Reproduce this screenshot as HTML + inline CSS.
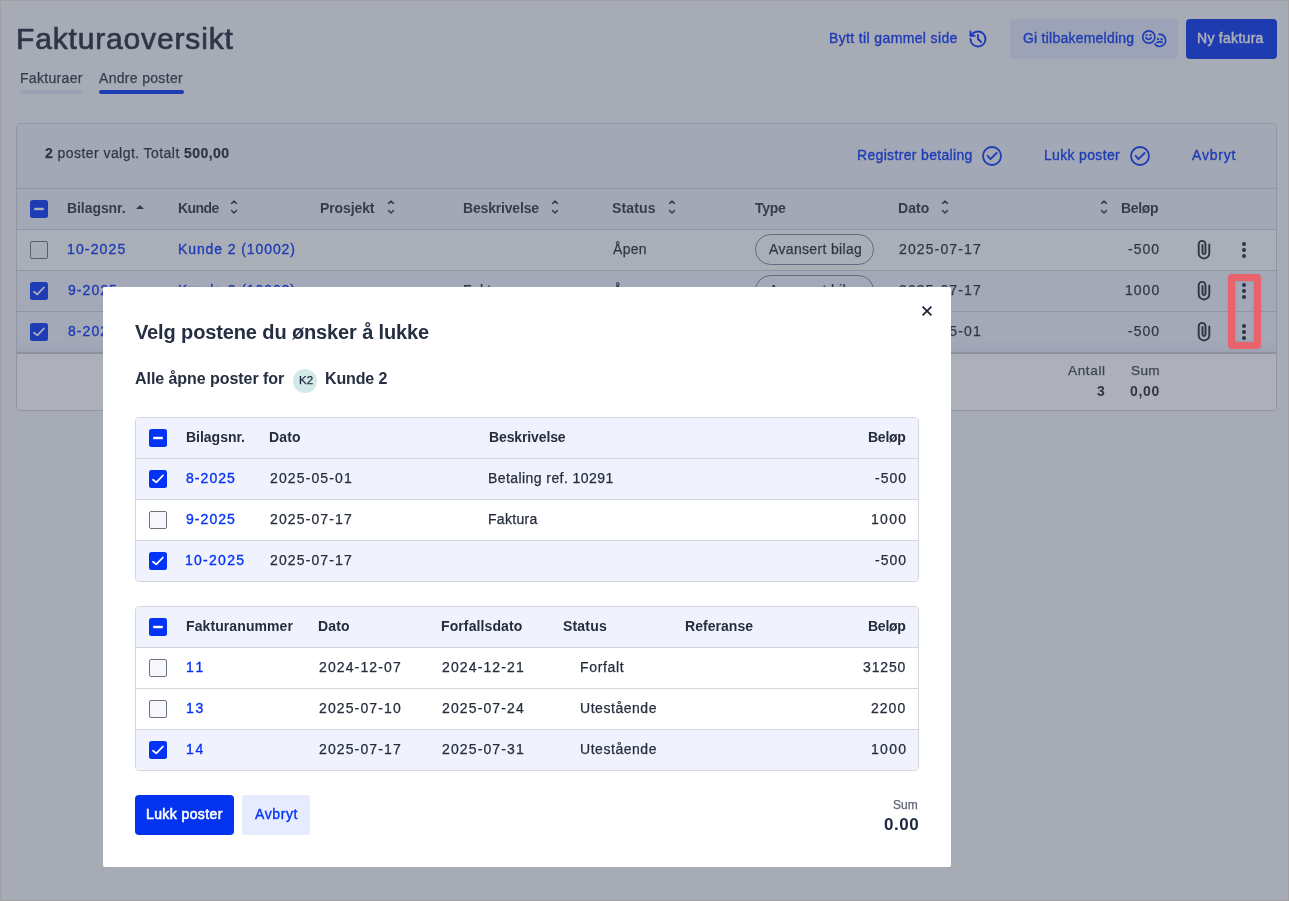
<!DOCTYPE html>
<html><head><meta charset="utf-8"><style>
html,body{margin:0;padding:0;}
body{width:1289px;height:901px;position:relative;overflow:hidden;background:#f4f6fa;font-family:"Liberation Sans", sans-serif;}
.abs{position:absolute;}
.t{position:absolute;white-space:nowrap;line-height:1;will-change:transform;}
.t b{font-weight:700;}
.panel{border:1px solid #cdd2dc;border-radius:4px;}
.pill{border:1px solid #80869a;border-radius:16px;}
.mt{border:1px solid #d4d7de;border-radius:4px;}
</style></head><body>
<span class="t" id="title" style="font-size:30px;font-weight:400;color:#1e293b;top:23.61px;letter-spacing:0.841px;-webkit-text-stroke:0.7px #1e293b;left:15.50px;">Fakturaoversikt</span>
<span class="t" id="tab1" style="font-size:14px;font-weight:400;color:#2b3445;top:71.15px;letter-spacing:0.319px;-webkit-text-stroke:0.25px #2b3445;left:19.70px;">Fakturaer</span>
<span class="t" id="tab2" style="font-size:14px;font-weight:400;color:#2b3445;top:71.15px;letter-spacing:0.319px;-webkit-text-stroke:0.25px #2b3445;left:99.00px;">Andre poster</span>
<div class="abs" style="left:20px;top:90px;width:63px;height:4px;border-radius:2px;background:#dfe5f6"></div>
<div class="abs" style="left:99px;top:90px;width:85px;height:4px;border-radius:2px;background:#0433f8"></div>
<span class="t" id="bytt" style="font-size:14px;font-weight:400;color:#0433f8;top:31.15px;letter-spacing:0.369px;-webkit-text-stroke:0.35px #0433f8;left:829.00px;">Bytt til gammel side</span>
<svg class="abs" style="left:968px;top:28.8px" width="20" height="20" viewBox="0 0 24 24" fill="none" stroke="#0433f8" stroke-width="2.3" stroke-linecap="round" stroke-linejoin="round">
      <path d="M3 12a9 9 0 1 0 9-9 9.75 9.75 0 0 0-6.74 2.74L3 8"/><path d="M3 3v5h5"/><path d="M12 7v5l3.6 3.6"/></svg>
<div class="abs" style="left:1010px;top:19px;width:168px;height:40px;border-radius:4px;background:#e3e9fd"></div>
<span class="t" id="gi" style="font-size:14px;font-weight:400;color:#0433f8;top:31.15px;letter-spacing:0.231px;-webkit-text-stroke:0.35px #0433f8;left:1022.70px;">Gi tilbakemelding</span>
<svg class="abs" style="left:1138px;top:26px" width="32" height="26" viewBox="0 0 32 26" fill="none" stroke="#0433f8" stroke-width="1.6" stroke-linecap="round" stroke-linejoin="round">
      <circle cx="10.8" cy="11" r="6.1"/><circle cx="8.5" cy="9.2" r="0.35" fill="#0433f8"/><circle cx="12.4" cy="9.2" r="0.35" fill="#0433f8"/>
      <path d="M7.8 11.8 Q10.3 15 13.4 11.8"/>
      <path d="M21.1 8.4 A6 6 0 1 1 16.7 17.8"/><circle cx="20" cy="13" r="0.4" fill="#0433f8"/><circle cx="23.6" cy="13.2" r="0.4" fill="#0433f8"/>
      <path d="M18.8 16.6 Q21.5 15.2 24.4 16.5"/></svg>
<div class="abs" style="left:1186px;top:19px;width:91px;height:40px;border-radius:4px;background:#0433f0"></div>
<span class="t" id="ny" style="font-size:14px;font-weight:400;color:#ffffff;top:31.15px;letter-spacing:0.287px;-webkit-text-stroke:0.4px #ffffff;left:1197.40px;">Ny faktura</span>
<div class="abs panel" style="left:16px;top:123px;width:1259px;height:286px;"></div>
<div class="abs" style="left:17px;top:124px;width:1259px;height:64px;background:#edf1fb;border-radius:3px 3px 0 0"></div>
<div class="abs" style="left:17px;top:188px;width:1259px;height:1px;background:#cdd2dc"></div>
<div class="abs" style="left:17px;top:189px;width:1259px;height:40px;background:#edf1fb"></div>
<div class="abs" style="left:17px;top:229px;width:1259px;height:1px;background:#cdd2dc"></div>
<div class="abs" style="left:17px;top:230px;width:1259px;height:40px;background:#fafbfc"></div>
<div class="abs" style="left:17px;top:270px;width:1259px;height:1px;background:#cdd2dc"></div>
<div class="abs" style="left:17px;top:271px;width:1259px;height:40px;background:#eef2fd"></div>
<div class="abs" style="left:17px;top:311px;width:1259px;height:1px;background:#cdd2dc"></div>
<div class="abs" style="left:17px;top:312px;width:1259px;height:40px;background:linear-gradient(#eef2fd 0,#eef2fd 70%,#e4e9f8 100%)"></div>
<div class="abs" style="left:17px;top:352px;width:1259px;height:2px;background:#c2c8d4"></div>
<div class="abs" style="left:17px;top:354px;width:1259px;height:56px;background:#ffffff;border-radius:0 0 3px 3px"></div>
<span class="t" id="valgt" style="font-size:14px;font-weight:400;color:#1e2738;top:146.15px;letter-spacing:0.44px;-webkit-text-stroke:0.25px #1e2738;left:45.30px;"><b>2</b> poster valgt. Totalt <b>500,00</b></span>
<span class="t" id="reg" style="font-size:14px;font-weight:400;color:#0433f8;top:148.15px;letter-spacing:0.333px;-webkit-text-stroke:0.35px #0433f8;left:856.80px;">Registrer betaling</span>
<span class="t" id="lukk" style="font-size:14px;font-weight:400;color:#0433f8;top:148.15px;letter-spacing:0.329px;-webkit-text-stroke:0.35px #0433f8;left:1044.00px;">Lukk poster</span>
<span class="t" id="avb" style="font-size:14px;font-weight:400;color:#0433f8;top:148.15px;letter-spacing:0.813px;-webkit-text-stroke:0.35px #0433f8;left:1192.40px;">Avbryt</span>
<svg class="abs" style="left:980px;top:144px" width="24" height="24" viewBox="0 0 24 24" fill="none" stroke="#0433f8" stroke-width="1.8" stroke-linecap="round" stroke-linejoin="round">
        <circle cx="12" cy="12" r="9"/><path d="M7.6 11.8 L10.4 15.2 L16.6 9"/></svg>
<svg class="abs" style="left:1128px;top:144px" width="24" height="24" viewBox="0 0 24 24" fill="none" stroke="#0433f8" stroke-width="1.8" stroke-linecap="round" stroke-linejoin="round">
        <circle cx="12" cy="12" r="9"/><path d="M7.6 11.8 L10.4 15.2 L16.6 9"/></svg>
<svg class="abs" style="left:30px;top:200px" width="18" height="18" viewBox="0 0 18 18"><rect x="0" y="0" width="18" height="18" rx="2.5" fill="#0433f8"/><path d="M4.2 9 H13.8" stroke="#fff" stroke-width="2.4"/></svg>
<span class="t" id="h1" style="font-size:14px;font-weight:700;color:#2b3445;top:201.15px;letter-spacing:-0.068px;left:66.70px;">Bilagsnr.</span>
<span class="t" id="h2" style="font-size:14px;font-weight:700;color:#2b3445;top:201.15px;letter-spacing:-0.591px;left:177.70px;">Kunde</span>
<span class="t" id="h3" style="font-size:14px;font-weight:700;color:#2b3445;top:201.15px;letter-spacing:-0.112px;left:320.20px;">Prosjekt</span>
<span class="t" id="h4" style="font-size:14px;font-weight:700;color:#2b3445;top:201.15px;letter-spacing:-0.175px;left:462.90px;">Beskrivelse</span>
<span class="t" id="h5" style="font-size:14px;font-weight:700;color:#2b3445;top:201.15px;letter-spacing:0.140px;left:612.00px;">Status</span>
<span class="t" id="h6" style="font-size:14px;font-weight:700;color:#2b3445;top:201.15px;letter-spacing:-0.284px;left:755.10px;">Type</span>
<span class="t" id="h7" style="font-size:14px;font-weight:700;color:#2b3445;top:201.15px;letter-spacing:0.080px;left:898.20px;">Dato</span>
<span class="t" id="h8" style="font-size:14px;font-weight:700;color:#2b3445;top:201.15px;letter-spacing:-0.334px;left:1121.20px;">Beløp</span>
<svg class="abs" style="left:134px;top:203px" width="12" height="8" viewBox="0 0 12 8"><path d="M2 6 L6 2 L10 6 Z" fill="#2b3445"/></svg>
<svg class="abs" style="left:227.9px;top:198px" width="12" height="18" viewBox="0 0 12 18" fill="none" stroke="#2b3445" stroke-width="1.4" stroke-linecap="round" stroke-linejoin="round"><path d="M3.5 5.5 L6 2.9 L8.5 5.5"/><path d="M3.5 12.5 L6 15.1 L8.5 12.5"/></svg>
<svg class="abs" style="left:385.0px;top:198px" width="12" height="18" viewBox="0 0 12 18" fill="none" stroke="#2b3445" stroke-width="1.4" stroke-linecap="round" stroke-linejoin="round"><path d="M3.5 5.5 L6 2.9 L8.5 5.5"/><path d="M3.5 12.5 L6 15.1 L8.5 12.5"/></svg>
<svg class="abs" style="left:549.0px;top:198px" width="12" height="18" viewBox="0 0 12 18" fill="none" stroke="#2b3445" stroke-width="1.4" stroke-linecap="round" stroke-linejoin="round"><path d="M3.5 5.5 L6 2.9 L8.5 5.5"/><path d="M3.5 12.5 L6 15.1 L8.5 12.5"/></svg>
<svg class="abs" style="left:665.5px;top:198px" width="12" height="18" viewBox="0 0 12 18" fill="none" stroke="#2b3445" stroke-width="1.4" stroke-linecap="round" stroke-linejoin="round"><path d="M3.5 5.5 L6 2.9 L8.5 5.5"/><path d="M3.5 12.5 L6 15.1 L8.5 12.5"/></svg>
<svg class="abs" style="left:938.5px;top:198px" width="12" height="18" viewBox="0 0 12 18" fill="none" stroke="#2b3445" stroke-width="1.4" stroke-linecap="round" stroke-linejoin="round"><path d="M3.5 5.5 L6 2.9 L8.5 5.5"/><path d="M3.5 12.5 L6 15.1 L8.5 12.5"/></svg>
<svg class="abs" style="left:1098.0px;top:198px" width="12" height="18" viewBox="0 0 12 18" fill="none" stroke="#2b3445" stroke-width="1.4" stroke-linecap="round" stroke-linejoin="round"><path d="M3.5 5.5 L6 2.9 L8.5 5.5"/><path d="M3.5 12.5 L6 15.1 L8.5 12.5"/></svg>
<div class="abs" style="left:30px;top:241px;width:16px;height:16px;border:1px solid #6b7282;border-radius:2px;background:#f7f8fb"></div>
<span class="t" id="rb0" style="font-size:14px;font-weight:400;color:#0433f8;top:242.15px;letter-spacing:1.135px;-webkit-text-stroke:0.35px #0433f8;left:66.50px;">10-2025</span>
<span class="t" id="rk0" style="font-size:14px;font-weight:400;color:#0433f8;top:242.15px;letter-spacing:0.904px;-webkit-text-stroke:0.35px #0433f8;left:177.50px;">Kunde 2 (10002)</span>
<span class="t" id="rs0" style="font-size:14px;font-weight:400;color:#1e2738;top:242.15px;letter-spacing:0.297px;-webkit-text-stroke:0.25px #1e2738;left:612.80px;">Åpen</span>
<div class="abs pill" style="left:755px;top:234px;width:117px;height:29px;"></div>
<span class="t" id="rp0" style="font-size:14px;font-weight:400;color:#1e2738;top:242.15px;letter-spacing:0.340px;-webkit-text-stroke:0.25px #1e2738;left:768.50px;">Avansert bilag</span>
<span class="t" id="rdt0" style="font-size:14px;font-weight:400;color:#1e2738;top:242.15px;letter-spacing:1.119px;-webkit-text-stroke:0.25px #1e2738;left:899.00px;">2025-07-17</span>
<span class="t" id="ra0" style="font-size:14px;font-weight:400;color:#1e2738;top:242.15px;letter-spacing:1.022px;-webkit-text-stroke:0.25px #1e2738;right:129.19px;">-500</span>
<svg class="abs" style="left:1194px;top:238px" width="20" height="24" viewBox="0 0 20 24" fill="none" stroke="#1e2738" stroke-width="1.9" stroke-linecap="round">
        <path d="M15.3 6.5 V15.2 A5.3 5.3 0 0 1 4.7 15.2 V6.3 A3.4 3.4 0 0 1 11.5 6.3 V14.6 A1.5 1.5 0 0 1 8.5 14.6 V7"/></svg>
<div class="abs" style="left:1242px;top:241.5px;width:4px;height:4px;border-radius:50%;background:#1e2738"></div>
<div class="abs" style="left:1242px;top:247.5px;width:4px;height:4px;border-radius:50%;background:#1e2738"></div>
<div class="abs" style="left:1242px;top:253.5px;width:4px;height:4px;border-radius:50%;background:#1e2738"></div>
<svg class="abs" style="left:30px;top:282px" width="18" height="18" viewBox="0 0 18 18"><rect x="0" y="0" width="18" height="18" rx="2.5" fill="#0433f8"/><path d="M4 9.7 L7.3 12.4 L13.9 5.5" stroke="#fff" stroke-width="1.8" fill="none" stroke-linecap="round" stroke-linejoin="round"/></svg>
<span class="t" id="rb1" style="font-size:14px;font-weight:400;color:#0433f8;top:283.15px;letter-spacing:1.059px;-webkit-text-stroke:0.35px #0433f8;left:67.50px;">9-2025</span>
<span class="t" id="rk1" style="font-size:14px;font-weight:400;color:#0433f8;top:283.15px;letter-spacing:0.904px;-webkit-text-stroke:0.35px #0433f8;left:177.50px;">Kunde 2 (10002)</span>
<span class="t" id="rd1" style="font-size:14px;font-weight:400;color:#1e2738;top:283.15px;letter-spacing:0.321px;-webkit-text-stroke:0.25px #1e2738;left:462.70px;">Faktura</span>
<span class="t" id="rs1" style="font-size:14px;font-weight:400;color:#1e2738;top:283.15px;letter-spacing:0.297px;-webkit-text-stroke:0.25px #1e2738;left:612.80px;">Åpen</span>
<div class="abs pill" style="left:755px;top:275px;width:117px;height:29px;"></div>
<span class="t" id="rp1" style="font-size:14px;font-weight:400;color:#1e2738;top:283.15px;letter-spacing:0.340px;-webkit-text-stroke:0.25px #1e2738;left:768.50px;">Avansert bilag</span>
<span class="t" id="rdt1" style="font-size:14px;font-weight:400;color:#1e2738;top:283.15px;letter-spacing:1.119px;-webkit-text-stroke:0.25px #1e2738;left:899.00px;">2025-07-17</span>
<span class="t" id="ra1" style="font-size:14px;font-weight:400;color:#1e2738;top:283.15px;letter-spacing:1.014px;-webkit-text-stroke:0.25px #1e2738;right:129.20px;">1000</span>
<svg class="abs" style="left:1194px;top:279px" width="20" height="24" viewBox="0 0 20 24" fill="none" stroke="#1e2738" stroke-width="1.9" stroke-linecap="round">
        <path d="M15.3 6.5 V15.2 A5.3 5.3 0 0 1 4.7 15.2 V6.3 A3.4 3.4 0 0 1 11.5 6.3 V14.6 A1.5 1.5 0 0 1 8.5 14.6 V7"/></svg>
<div class="abs" style="left:1242px;top:282.5px;width:4px;height:4px;border-radius:50%;background:#1e2738"></div>
<div class="abs" style="left:1242px;top:288.5px;width:4px;height:4px;border-radius:50%;background:#1e2738"></div>
<div class="abs" style="left:1242px;top:294.5px;width:4px;height:4px;border-radius:50%;background:#1e2738"></div>
<svg class="abs" style="left:30px;top:323px" width="18" height="18" viewBox="0 0 18 18"><rect x="0" y="0" width="18" height="18" rx="2.5" fill="#0433f8"/><path d="M4 9.7 L7.3 12.4 L13.9 5.5" stroke="#fff" stroke-width="1.8" fill="none" stroke-linecap="round" stroke-linejoin="round"/></svg>
<span class="t" id="rb2" style="font-size:14px;font-weight:400;color:#0433f8;top:324.15px;letter-spacing:1.059px;-webkit-text-stroke:0.35px #0433f8;left:67.50px;">8-2025</span>
<span class="t" id="rk2" style="font-size:14px;font-weight:400;color:#0433f8;top:324.15px;letter-spacing:0.904px;-webkit-text-stroke:0.35px #0433f8;left:177.50px;">Kunde 2 (10002)</span>
<span class="t" id="rd2" style="font-size:14px;font-weight:400;color:#1e2738;top:324.15px;letter-spacing:1.599px;-webkit-text-stroke:0.25px #1e2738;left:462.70px;">Betaling</span>
<span class="t" id="rs2" style="font-size:14px;font-weight:400;color:#1e2738;top:324.15px;letter-spacing:0.297px;-webkit-text-stroke:0.25px #1e2738;left:612.80px;">Åpen</span>
<div class="abs pill" style="left:755px;top:316px;width:117px;height:29px;"></div>
<span class="t" id="rp2" style="font-size:14px;font-weight:400;color:#1e2738;top:324.15px;letter-spacing:0.340px;-webkit-text-stroke:0.25px #1e2738;left:768.50px;">Avansert bilag</span>
<span class="t" id="rdt2" style="font-size:14px;font-weight:400;color:#1e2738;top:324.15px;letter-spacing:1.119px;-webkit-text-stroke:0.25px #1e2738;left:899.00px;">2025-05-01</span>
<span class="t" id="ra2" style="font-size:14px;font-weight:400;color:#1e2738;top:324.15px;letter-spacing:1.022px;-webkit-text-stroke:0.25px #1e2738;right:129.19px;">-500</span>
<svg class="abs" style="left:1194px;top:320px" width="20" height="24" viewBox="0 0 20 24" fill="none" stroke="#1e2738" stroke-width="1.9" stroke-linecap="round">
        <path d="M15.3 6.5 V15.2 A5.3 5.3 0 0 1 4.7 15.2 V6.3 A3.4 3.4 0 0 1 11.5 6.3 V14.6 A1.5 1.5 0 0 1 8.5 14.6 V7"/></svg>
<div class="abs" style="left:1242px;top:323.5px;width:4px;height:4px;border-radius:50%;background:#1e2738"></div>
<div class="abs" style="left:1242px;top:329.5px;width:4px;height:4px;border-radius:50%;background:#1e2738"></div>
<div class="abs" style="left:1242px;top:335.5px;width:4px;height:4px;border-radius:50%;background:#1e2738"></div>
<span class="t" id="antall" style="font-size:13.6px;font-weight:400;color:#3a4353;top:363.79px;letter-spacing:0.603px;-webkit-text-stroke:0.25px #3a4353;right:183.38px;">Antall</span>
<span class="t" id="sumf" style="font-size:13.6px;font-weight:400;color:#3a4353;top:363.79px;letter-spacing:0.336px;-webkit-text-stroke:0.25px #3a4353;right:129.04px;">Sum</span>
<span class="t" id="three" style="font-size:14px;font-weight:700;color:#1e2738;top:383.65px;letter-spacing:0.000px;right:184.21px;">3</span>
<span class="t" id="zero" style="font-size:14px;font-weight:700;color:#1e2738;top:383.65px;letter-spacing:0.646px;right:129.27px;">0,00</span>
<div class="abs" style="left:0;top:0;width:1289px;height:901px;background:rgba(65,71,90,0.43)"></div>
<div class="abs" style="left:1228px;top:274px;width:33px;height:75px;box-sizing:border-box;border:7px solid #e8636b;border-radius:4px;box-shadow:inset 0 0 3px rgba(30,40,70,0.18), 0 0 2px rgba(30,40,70,0.12)"></div>
<div class="abs" style="left:103px;top:287px;width:848px;height:580px;background:#fff;border-radius:2px"></div>
<svg class="abs" style="left:917px;top:301px" width="20" height="20" viewBox="0 0 20 20" fill="none" stroke="#1a2238" stroke-width="1.7" stroke-linecap="butt"><path d="M5.6 5.6 L14.4 14.4 M14.4 5.6 L5.6 14.4"/></svg>
<span class="t" id="mtitle" style="font-size:20px;font-weight:700;color:#262e41;top:322.07px;letter-spacing:-0.126px;left:134.90px;">Velg postene du ønsker å lukke</span>
<span class="t" id="alle" style="font-size:16px;font-weight:700;color:#262e41;top:371.16px;letter-spacing:-0.054px;left:135.00px;">Alle åpne poster for</span>
<div class="abs" style="left:293px;top:369px;width:24px;height:24px;border-radius:50%;background:#d3e9e7"></div>
<span class="t" id="k2" style="font-size:11.5px;font-weight:400;color:#1d2640;top:375.07px;letter-spacing:0.000px;-webkit-text-stroke:0.25px #1d2640;left:299.00px;">K2</span>
<span class="t" id="kunde2" style="font-size:16px;font-weight:700;color:#262e41;top:371.16px;letter-spacing:-0.136px;left:324.60px;">Kunde 2</span>
<div class="abs mt" style="left:135px;top:417px;width:782px;height:163px;"></div>
<div class="abs" style="left:136px;top:418px;width:782px;height:40px;background:#f0f3fe;border-radius:3px 3px 0 0"></div>
<div class="abs" style="left:136px;top:458px;width:782px;height:1px;background:#d4d7de"></div>
<div class="abs" style="left:136px;top:459px;width:782px;height:40px;background:#f0f3fe;"></div>
<div class="abs" style="left:136px;top:499px;width:782px;height:1px;background:#d4d7de"></div>
<div class="abs" style="left:136px;top:500px;width:782px;height:40px;background:#ffffff;"></div>
<div class="abs" style="left:136px;top:540px;width:782px;height:1px;background:#d4d7de"></div>
<div class="abs" style="left:136px;top:541px;width:782px;height:40px;background:#f0f3fe;border-radius:0 0 3px 3px;"></div>
<svg class="abs" style="left:149px;top:429px" width="18" height="18" viewBox="0 0 18 18"><rect x="0" y="0" width="18" height="18" rx="2.5" fill="#0433f8"/><path d="M4.2 9 H13.8" stroke="#fff" stroke-width="2.4"/></svg>
<span class="t" id="m1h1" style="font-size:14px;font-weight:700;color:#252d3d;top:430.15px;letter-spacing:-0.018px;left:185.80px;">Bilagsnr.</span>
<span class="t" id="m1h2" style="font-size:14px;font-weight:700;color:#252d3d;top:430.15px;letter-spacing:0.147px;left:268.70px;">Dato</span>
<span class="t" id="m1h3" style="font-size:14px;font-weight:700;color:#252d3d;top:430.15px;letter-spacing:-0.125px;left:488.60px;">Beskrivelse</span>
<span class="t" id="m1h4" style="font-size:14px;font-weight:700;color:#252d3d;top:430.15px;letter-spacing:-0.259px;right:382.91px;">Beløp</span>
<svg class="abs" style="left:149px;top:470px" width="18" height="18" viewBox="0 0 18 18"><rect x="0" y="0" width="18" height="18" rx="2.5" fill="#0433f8"/><path d="M4 9.7 L7.3 12.4 L13.9 5.5" stroke="#fff" stroke-width="1.8" fill="none" stroke-linecap="round" stroke-linejoin="round"/></svg>
<span class="t" id="m1r0a" style="font-size:14px;font-weight:400;color:#0433f8;top:471.15px;letter-spacing:1.059px;-webkit-text-stroke:0.35px #0433f8;left:186.30px;">8-2025</span>
<span class="t" id="m1r0b" style="font-size:14px;font-weight:400;color:#252d3d;top:471.15px;letter-spacing:1.130px;-webkit-text-stroke:0.25px #252d3d;left:269.50px;">2025-05-01</span>
<span class="t" id="m1r0c" style="font-size:14px;font-weight:400;color:#252d3d;top:471.15px;letter-spacing:0.425px;-webkit-text-stroke:0.25px #252d3d;left:488.40px;">Betaling ref. 10291</span>
<span class="t" id="m1r0d" style="font-size:14px;font-weight:400;color:#252d3d;top:471.15px;letter-spacing:1.022px;-webkit-text-stroke:0.25px #252d3d;right:382.39px;">-500</span>
<div class="abs" style="left:149px;top:511px;width:16px;height:16px;border:1px solid #6b7282;border-radius:2px;background:#f7f8fb"></div>
<span class="t" id="m1r1a" style="font-size:14px;font-weight:400;color:#0433f8;top:512.15px;letter-spacing:1.059px;-webkit-text-stroke:0.35px #0433f8;left:186.30px;">9-2025</span>
<span class="t" id="m1r1b" style="font-size:14px;font-weight:400;color:#252d3d;top:512.15px;letter-spacing:1.130px;-webkit-text-stroke:0.25px #252d3d;left:269.50px;">2025-07-17</span>
<span class="t" id="m1r1c" style="font-size:14px;font-weight:400;color:#252d3d;top:512.15px;letter-spacing:0.321px;-webkit-text-stroke:0.25px #252d3d;left:488.40px;">Faktura</span>
<span class="t" id="m1r1d" style="font-size:14px;font-weight:400;color:#252d3d;top:512.15px;letter-spacing:1.314px;-webkit-text-stroke:0.25px #252d3d;right:382.10px;">1000</span>
<svg class="abs" style="left:149px;top:552px" width="18" height="18" viewBox="0 0 18 18"><rect x="0" y="0" width="18" height="18" rx="2.5" fill="#0433f8"/><path d="M4 9.7 L7.3 12.4 L13.9 5.5" stroke="#fff" stroke-width="1.8" fill="none" stroke-linecap="round" stroke-linejoin="round"/></svg>
<span class="t" id="m1r2a" style="font-size:14px;font-weight:400;color:#0433f8;top:553.15px;letter-spacing:1.268px;-webkit-text-stroke:0.35px #0433f8;left:185.30px;">10-2025</span>
<span class="t" id="m1r2b" style="font-size:14px;font-weight:400;color:#252d3d;top:553.15px;letter-spacing:1.130px;-webkit-text-stroke:0.25px #252d3d;left:269.50px;">2025-07-17</span>
<span class="t" id="m1r2d" style="font-size:14px;font-weight:400;color:#252d3d;top:553.15px;letter-spacing:1.022px;-webkit-text-stroke:0.25px #252d3d;right:382.39px;">-500</span>
<div class="abs mt" style="left:135px;top:606px;width:782px;height:163px;"></div>
<div class="abs" style="left:136px;top:607px;width:782px;height:40px;background:#f0f3fe;border-radius:3px 3px 0 0"></div>
<div class="abs" style="left:136px;top:647px;width:782px;height:1px;background:#d4d7de"></div>
<div class="abs" style="left:136px;top:648px;width:782px;height:40px;background:#ffffff;"></div>
<div class="abs" style="left:136px;top:688px;width:782px;height:1px;background:#d4d7de"></div>
<div class="abs" style="left:136px;top:689px;width:782px;height:40px;background:#ffffff;"></div>
<div class="abs" style="left:136px;top:729px;width:782px;height:1px;background:#d4d7de"></div>
<div class="abs" style="left:136px;top:730px;width:782px;height:40px;background:#f0f3fe;border-radius:0 0 3px 3px;"></div>
<svg class="abs" style="left:149px;top:618px" width="18" height="18" viewBox="0 0 18 18"><rect x="0" y="0" width="18" height="18" rx="2.5" fill="#0433f8"/><path d="M4.2 9 H13.8" stroke="#fff" stroke-width="2.4"/></svg>
<span class="t" id="m2h1" style="font-size:14px;font-weight:700;color:#252d3d;top:619.15px;letter-spacing:0.095px;left:185.50px;">Fakturanummer</span>
<span class="t" id="m2h2" style="font-size:14px;font-weight:700;color:#252d3d;top:619.15px;letter-spacing:0.147px;left:318.40px;">Dato</span>
<span class="t" id="m2h3" style="font-size:14px;font-weight:700;color:#252d3d;top:619.15px;letter-spacing:0.103px;left:440.80px;">Forfallsdato</span>
<span class="t" id="m2h4" style="font-size:14px;font-weight:700;color:#252d3d;top:619.15px;letter-spacing:0.180px;left:563.00px;">Status</span>
<span class="t" id="m2h5" style="font-size:14px;font-weight:700;color:#252d3d;top:619.15px;letter-spacing:0.048px;left:685.20px;">Referanse</span>
<span class="t" id="m2h6" style="font-size:14px;font-weight:700;color:#252d3d;top:619.15px;letter-spacing:-0.259px;right:382.91px;">Beløp</span>
<div class="abs" style="left:149px;top:659px;width:16px;height:16px;border:1px solid #6b7282;border-radius:2px;background:#f7f8fb"></div>
<span class="t" id="m2r0a" style="font-size:14px;font-weight:400;color:#0433f8;top:660.15px;letter-spacing:2.753px;-webkit-text-stroke:0.35px #0433f8;left:185.50px;">11</span>
<span class="t" id="m2r0b" style="font-size:14px;font-weight:400;color:#252d3d;top:660.15px;letter-spacing:1.119px;-webkit-text-stroke:0.25px #252d3d;left:319.20px;">2024-12-07</span>
<span class="t" id="m2r0c" style="font-size:14px;font-weight:400;color:#252d3d;top:660.15px;letter-spacing:1.130px;-webkit-text-stroke:0.25px #252d3d;left:441.60px;">2024-12-21</span>
<span class="t" id="m2r0d" style="font-size:14px;font-weight:400;color:#252d3d;top:660.15px;letter-spacing:0.652px;-webkit-text-stroke:0.25px #252d3d;left:580.30px;">Forfalt</span>
<span class="t" id="m2r0e" style="font-size:14px;font-weight:400;color:#252d3d;top:660.15px;letter-spacing:0.839px;-webkit-text-stroke:0.25px #252d3d;right:382.58px;">31250</span>
<div class="abs" style="left:149px;top:700px;width:16px;height:16px;border:1px solid #6b7282;border-radius:2px;background:#f7f8fb"></div>
<span class="t" id="m2r1a" style="font-size:14px;font-weight:400;color:#0433f8;top:701.15px;letter-spacing:1.714px;-webkit-text-stroke:0.35px #0433f8;left:185.50px;">13</span>
<span class="t" id="m2r1b" style="font-size:14px;font-weight:400;color:#252d3d;top:701.15px;letter-spacing:1.119px;-webkit-text-stroke:0.25px #252d3d;left:319.20px;">2025-07-10</span>
<span class="t" id="m2r1c" style="font-size:14px;font-weight:400;color:#252d3d;top:701.15px;letter-spacing:1.130px;-webkit-text-stroke:0.25px #252d3d;left:441.60px;">2025-07-24</span>
<span class="t" id="m2r1d" style="font-size:14px;font-weight:400;color:#252d3d;top:701.15px;letter-spacing:0.542px;-webkit-text-stroke:0.25px #252d3d;left:580.30px;">Utestående</span>
<span class="t" id="m2r1e" style="font-size:14px;font-weight:400;color:#252d3d;top:701.15px;letter-spacing:1.014px;-webkit-text-stroke:0.25px #252d3d;right:382.40px;">2200</span>
<svg class="abs" style="left:149px;top:741px" width="18" height="18" viewBox="0 0 18 18"><rect x="0" y="0" width="18" height="18" rx="2.5" fill="#0433f8"/><path d="M4 9.7 L7.3 12.4 L13.9 5.5" stroke="#fff" stroke-width="1.8" fill="none" stroke-linecap="round" stroke-linejoin="round"/></svg>
<span class="t" id="m2r2a" style="font-size:14px;font-weight:400;color:#0433f8;top:742.15px;letter-spacing:1.714px;-webkit-text-stroke:0.35px #0433f8;left:185.50px;">14</span>
<span class="t" id="m2r2b" style="font-size:14px;font-weight:400;color:#252d3d;top:742.15px;letter-spacing:1.119px;-webkit-text-stroke:0.25px #252d3d;left:319.20px;">2025-07-17</span>
<span class="t" id="m2r2c" style="font-size:14px;font-weight:400;color:#252d3d;top:742.15px;letter-spacing:1.130px;-webkit-text-stroke:0.25px #252d3d;left:441.60px;">2025-07-31</span>
<span class="t" id="m2r2d" style="font-size:14px;font-weight:400;color:#252d3d;top:742.15px;letter-spacing:0.542px;-webkit-text-stroke:0.25px #252d3d;left:580.30px;">Utestående</span>
<span class="t" id="m2r2e" style="font-size:14px;font-weight:400;color:#252d3d;top:742.15px;letter-spacing:1.314px;-webkit-text-stroke:0.25px #252d3d;right:382.10px;">1000</span>
<div class="abs" style="left:135px;top:795px;width:99px;height:40px;border-radius:4px;background:#0433f0"></div>
<span class="t" id="mlukk" style="font-size:14px;font-weight:400;color:#ffffff;top:807.15px;letter-spacing:0.399px;-webkit-text-stroke:0.55px #ffffff;left:145.70px;">Lukk poster</span>
<div class="abs" style="left:242px;top:795px;width:68px;height:40px;border-radius:4px;background:#e6ebfd"></div>
<span class="t" id="mavb" style="font-size:14px;font-weight:400;color:#0433f8;top:807.15px;letter-spacing:0.593px;-webkit-text-stroke:0.35px #0433f8;left:255.00px;">Avbryt</span>
<span class="t" id="msum" style="font-size:12px;font-weight:400;color:#5d6474;top:798.84px;letter-spacing:0.000px;-webkit-text-stroke:0.25px #5d6474;right:371.00px;">Sum</span>
<span class="t" id="mzero" style="font-size:17px;font-weight:700;color:#1d2640;top:815.61px;letter-spacing:0.556px;right:369.69px;">0.00</span>
<div class="abs" style="left:0;top:0;width:1287px;height:899px;border:1px solid #a0a0a0"></div>
</body></html>
